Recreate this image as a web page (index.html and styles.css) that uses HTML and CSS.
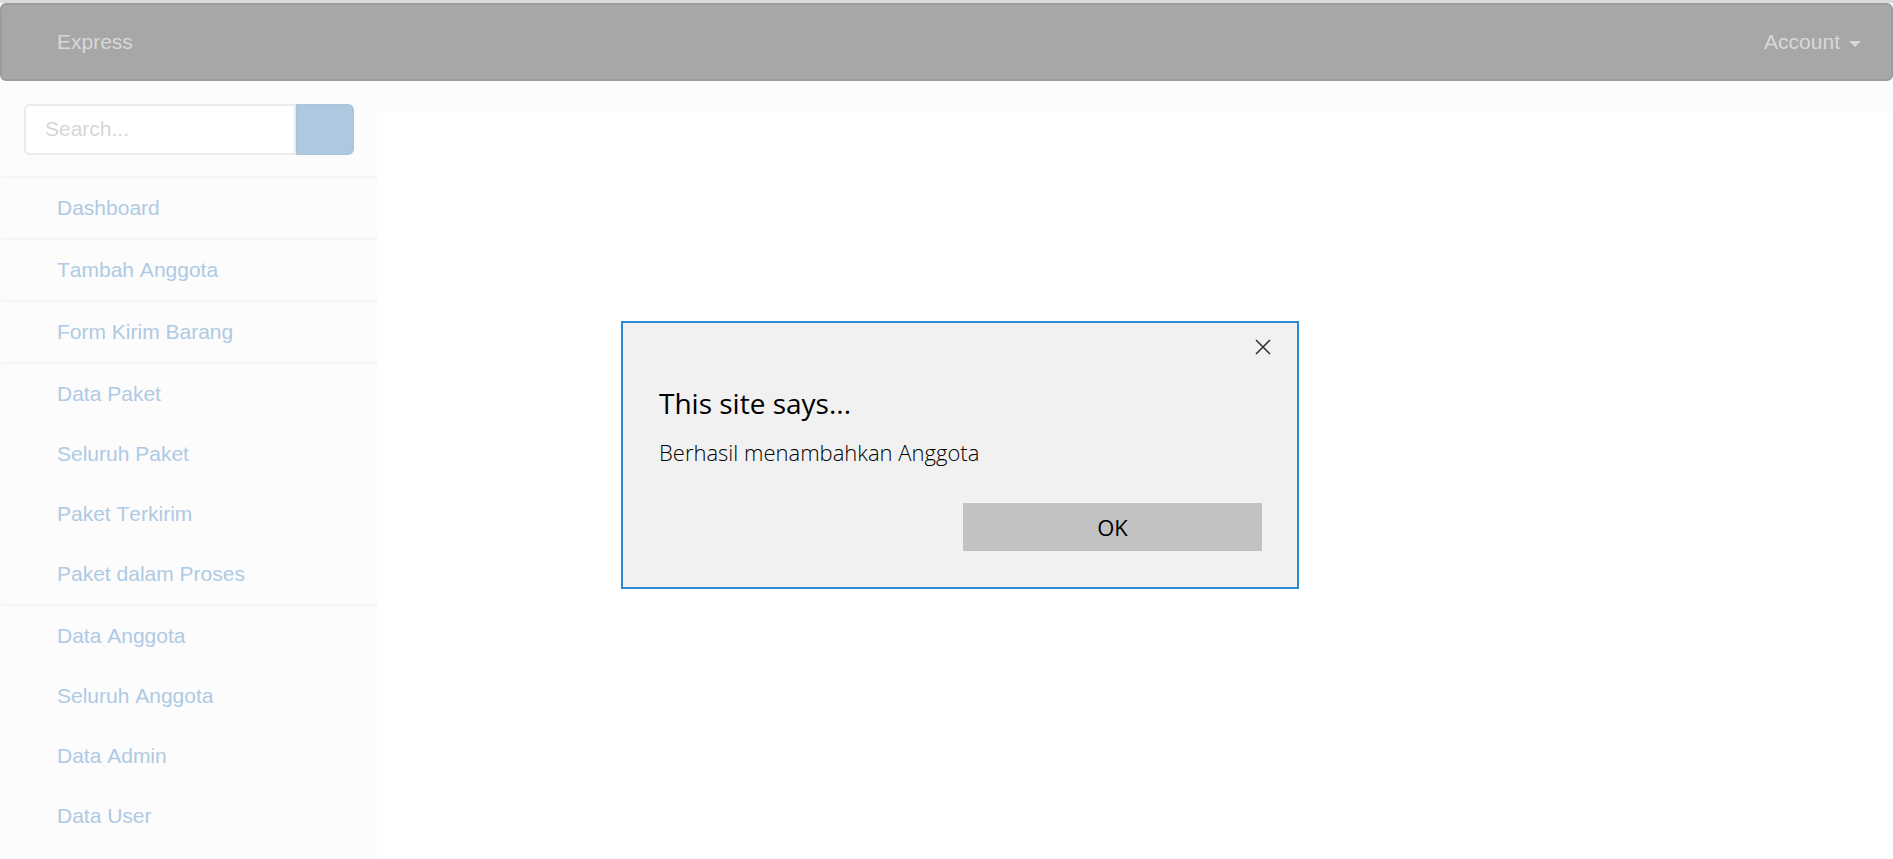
FILE: index.html
```html
<!DOCTYPE html>
<html lang="id">
<head>
<meta charset="utf-8">
<title>Express</title>
<link rel="stylesheet" href="styles.css">
</head>
<body>
<header class="navbar">
  <a class="brand" href="#">Express</a>
  <button class="account" type="button">Account <span class="caret"></span></button>
</header>
<div class="layout">
  <aside class="sidebar">
    <form class="search">
      <input class="search-input" type="text" placeholder="Search..." aria-label="Search">
      <button class="search-button" type="button" aria-label="Submit search"></button>
    </form>
    <nav class="menu">
      <div class="group"><a href="#">Dashboard</a></div>
      <div class="group"><a href="#">Tambah Anggota</a></div>
      <div class="group"><a href="#">Form Kirim Barang</a></div>
      <div class="group">
        <a href="#">Data Paket</a>
        <a href="#">Seluruh Paket</a>
        <a href="#">Paket Terkirim</a>
        <a href="#">Paket dalam Proses</a>
      </div>
      <div class="group">
        <a href="#">Data Anggota</a>
        <a href="#">Seluruh Anggota</a>
        <a href="#">Data Admin</a>
        <a href="#">Data User</a>
      </div>
    </nav>
  </aside>
  <main class="content"></main>
</div>
<div class="dialog" role="alertdialog" aria-labelledby="dialog-title" aria-describedby="dialog-message">
  <button class="close" type="button" aria-label="Close">
    <svg width="16" height="16" viewBox="0 0 16 16"><path d="M1 1L15 15M15 1L1 15" stroke="#333" stroke-width="1.6" fill="none"/></svg>
  </button>
  <h1 class="dialog-title" id="dialog-title">This site says...</h1>
  <p class="dialog-message" id="dialog-message">Berhasil menambahkan Anggota</p>
  <button class="ok" type="button">OK</button>
</div>
</body>
</html>
```
FILE: styles.css
```css
* { box-sizing: border-box; }
html { background: #fcfcfc; }
body {
  margin: 0;
  min-height: 100vh;
  display: flex;
  flex-direction: column;
  border-top: 3px solid #d9dada;
  font: 21px/30px "Liberation Sans", Arial, sans-serif;
  font-kerning: none;
}
a { text-decoration: none; }
button { font: inherit; }
.navbar {
  display: flex;
  justify-content: space-between;
  align-items: center;
  height: 78px;
  padding: 0 30px 0 55px;
  background: #a7a7a7;
  border: 2px solid #9c9c9c;
  border-radius: 6px;
}
.brand, .account { color: #d8d8d8; }
.account {
  display: flex;
  align-items: center;
  gap: 9px;
  padding: 0;
  border: 0;
  background: none;
}
.caret {
  margin-top: 3px;
  border-top: 6px solid #d8d8d8;
  border-left: 6px solid transparent;
  border-right: 6px solid transparent;
}
.layout { display: flex; flex: 1; }
.sidebar { width: 377px; padding-left: 2px; }
.content { flex: 1; margin-top: 30px; background: #fff; }
.search { display: flex; padding: 23px 23px 21px 22px; }
.search-input {
  flex: 1;
  min-width: 0;
  height: 51px;
  padding: 0 19px 2px;
  border: 2px solid #ebebeb;
  border-radius: 6px 0 0 6px;
  background: #fff;
  font: inherit;
}
.search-input::placeholder { color: #d6d6d6; opacity: 1; }
.search-button {
  width: 58px;
  border: 2px solid #abc5dd;
  border-radius: 0 6px 6px 0;
  background: #aec8e0;
}
.group { border-top: 2px solid #f5f5f5; }
.group a { display: block; padding: 15px 55px; color: #aecae4; }
.dialog {
  position: fixed;
  top: 321px;
  left: 621px;
  width: 678px;
  padding: 60px 35px 36px 36px;
  display: flex;
  flex-direction: column;
  background: #f1f1f1;
  border: 2px solid #2a8ad4;
  font-family: "Segoe UI", "Open Sans", "Noto Sans", sans-serif;
  color: #000;
}
.close {
  position: absolute;
  top: 16px;
  right: 26px;
  display: flex;
  padding: 0;
  border: 0;
  background: none;
}
.dialog-title { margin: 0; font-size: 28px; line-height: 40px; font-weight: 400; }
.dialog-message { margin: 13px 0 35px; font-size: 22px; line-height: 32px; font-weight: 300; }
.ok {
  align-self: flex-end;
  width: 299px;
  height: 48px;
  border: 0;
  background: #c2c2c2;
  font-size: 22px;
  color: #000;
}
```
